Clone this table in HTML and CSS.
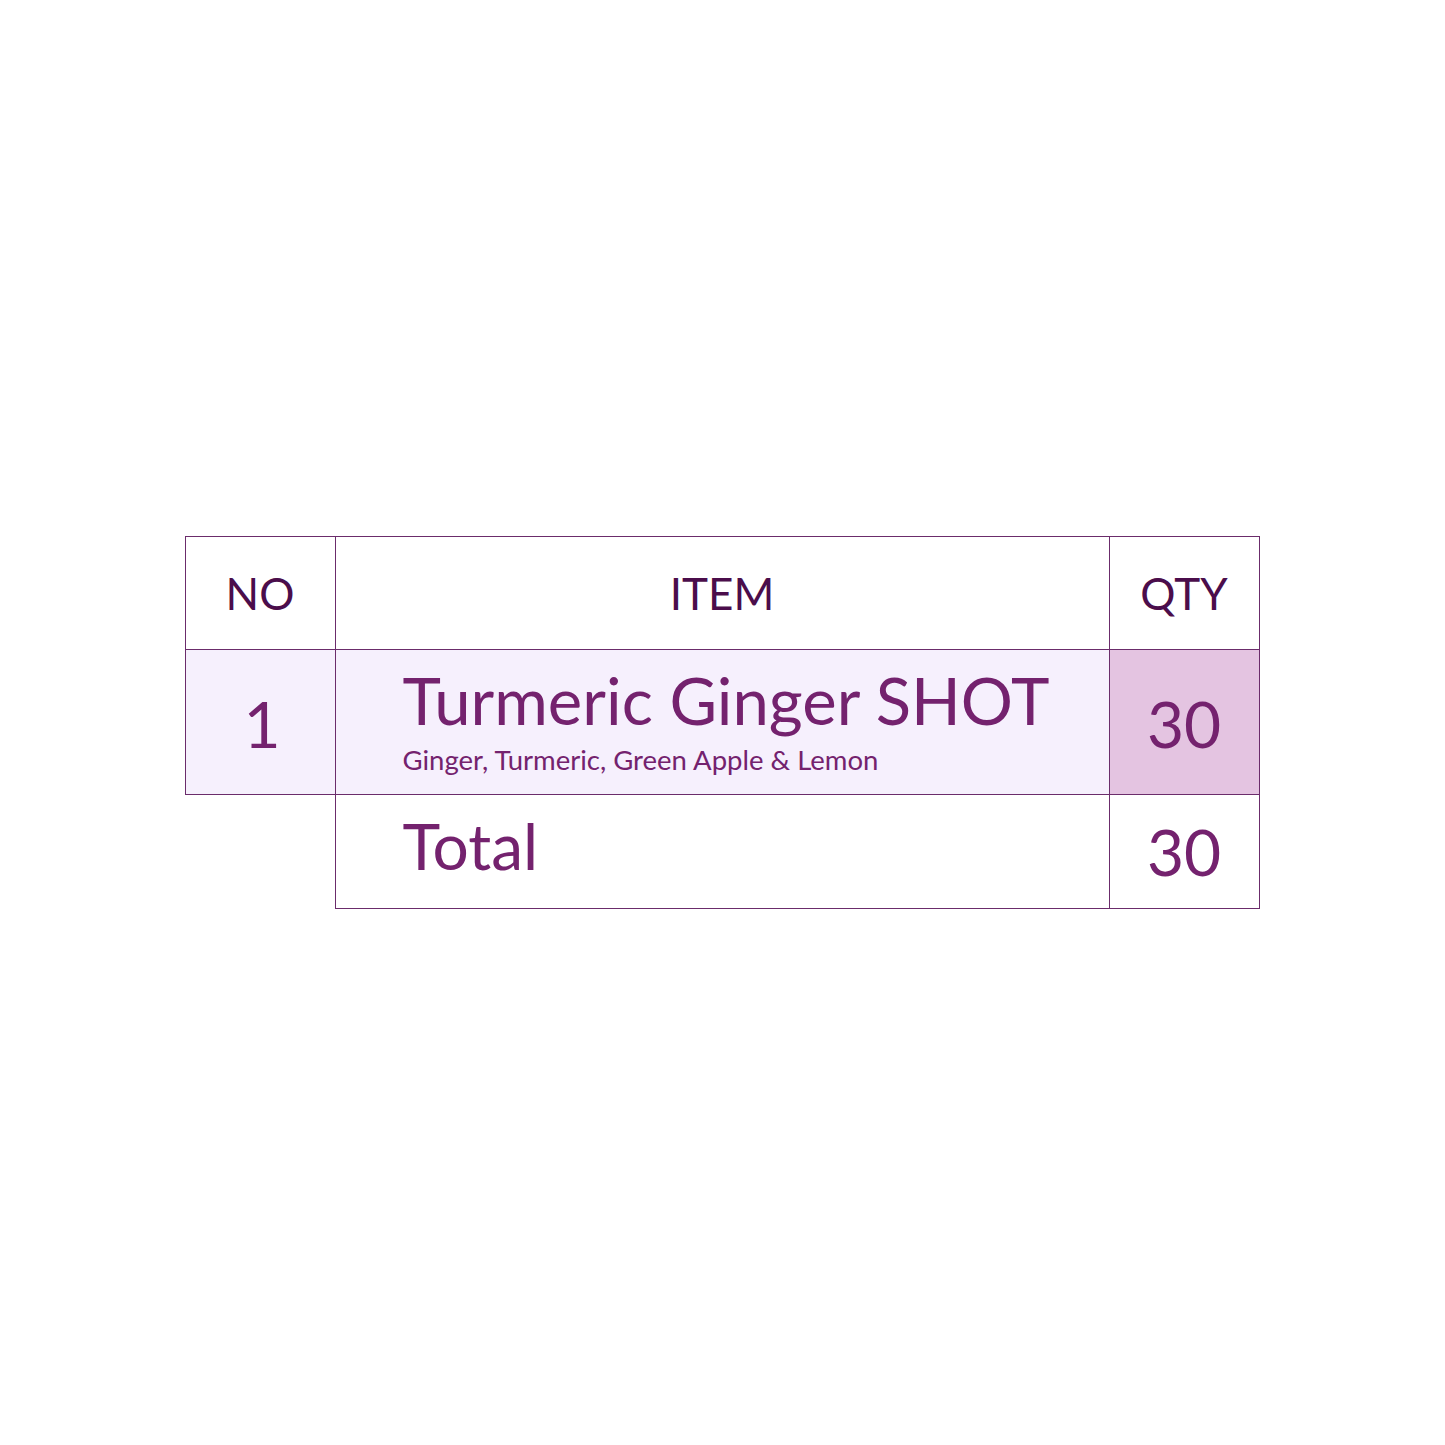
FILE: index.html
```html
<!DOCTYPE html>
<html>
<head>
<meta charset="utf-8">
<link rel="stylesheet" href="styles.css">
</head>
<body>
<div class="page">
  <table class="order">
    <colgroup>
      <col class="c-no">
      <col class="c-item">
      <col class="c-qty">
    </colgroup>
    <thead>
      <tr class="head">
        <th>NO</th>
        <th>ITEM</th>
        <th>QTY</th>
      </tr>
    </thead>
    <tbody>
      <tr class="line">
        <td class="no">1</td>
        <td class="item">
          <div class="title">Turmeric Ginger SHOT</div>
          <div class="sub">Ginger, Turmeric, Green Apple &amp; Lemon</div>
        </td>
        <td class="qty hl">30</td>
      </tr>
      <tr class="total">
        <td class="empty"></td>
        <td class="item"><div class="total-label">Total</div></td>
        <td class="qty">30</td>
      </tr>
    </tbody>
  </table>
</div>
</body>
</html>
```
FILE: styles.css
```css
html, body {
  margin: 0;
  padding: 0;
  background: #ffffff;
}
.page {
  width: 1445px;
  height: 1445px;
  display: flex;
  justify-content: center;
  padding-top: 536px;
  box-sizing: border-box;
  font-family: Lato, "Open Sans", sans-serif;
}
.order {
  border-collapse: collapse;
  table-layout: fixed;
  width: 1075px;
  align-self: flex-start;
  margin-left: -1px;
}
.c-no { width: 150px; }
.c-item { width: 774px; }
.c-qty { width: 150px; }
.order th, .order td {
  border: 1px solid #6b2c6b;
  padding: 0;
}
.head th {
  height: 112px;
  font-weight: 400;
  font-size: 44px;
  color: #4b0d4b;
  text-align: center;
  vertical-align: middle;
}
.line td {
  height: 142px;
  background: #f6f0fd;
  color: #74226e;
  vertical-align: middle;
}
.line .no, .qty {
  text-align: center;
  font-size: 64px;
}
.line .no { padding-top: 2px; padding-left: 4px; }
.line .qty.hl { background: #e4c4e1; padding-top: 2px; }
.item { padding-left: 67px !important; text-align: left; }
.title {
  font-size: 65.2px;
  line-height: 1;
  margin-top: -3px;
}
.sub {
  font-size: 27.5px;
  line-height: 1;
  margin-top: 13px;
}
.total td {
  height: 113px;
  color: #74226e;
  vertical-align: middle;
}
.total .empty {
  border: none;
}
.total-label {
  font-size: 64px;
  line-height: 1;
  margin-top: -12px;
}
.total .qty { padding-top: 0; }
```
